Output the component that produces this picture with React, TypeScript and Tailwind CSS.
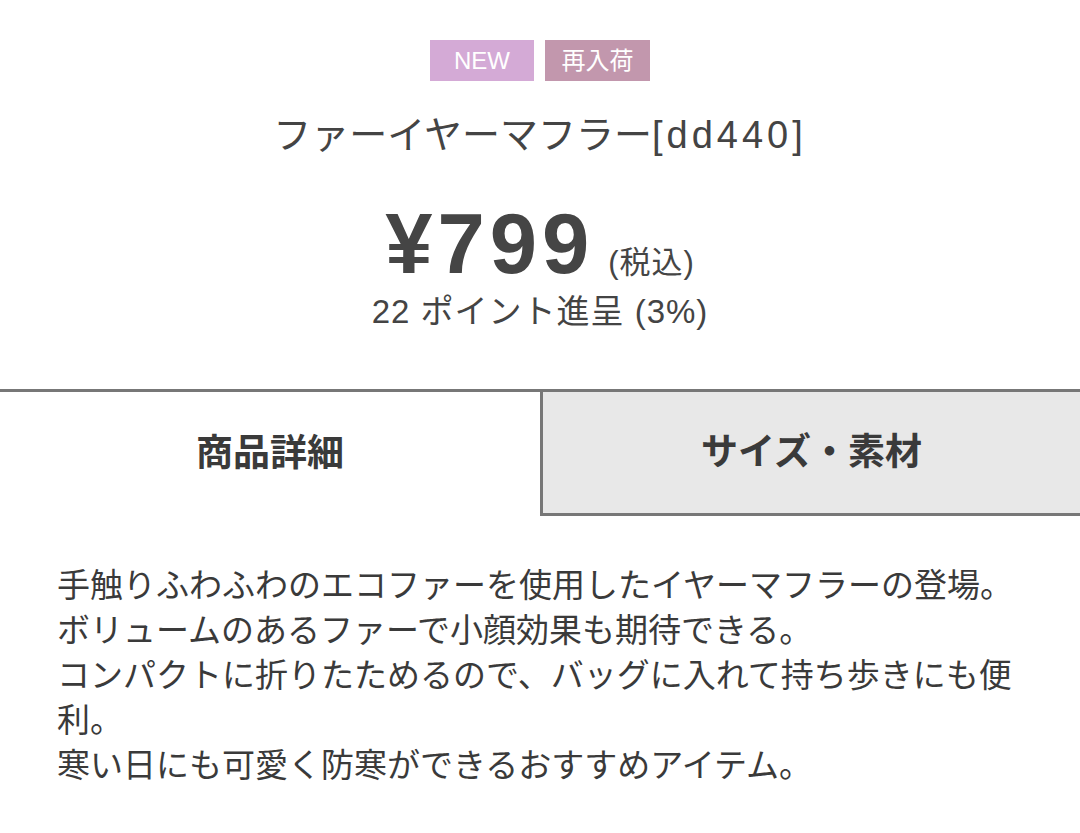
import React from "react";

const font = { fontFamily: '"Liberation Sans", "Noto Sans CJK JP", sans-serif' };

const lines = [
  "手触りふわふわのエコファーを使用したイヤーマフラーの登場。",
  "ボリュームのあるファーで小顔効果も期待できる。",
  "コンパクトに折りたためるので、バッグに入れて持ち歩きにも便利。",
  "寒い日にも可愛く防寒ができるおすすめアイテム。",
];

export default function App() {
  return (
    <div className="w-[1080px] h-[833px] bg-white text-[#444] overflow-hidden" style={font}>
      <div className="flex flex-col items-center pt-[40px]">
        <div className="flex gap-[11px]">
          <span className="flex h-[41px] w-[104px] items-center justify-center bg-[#d4aad6] text-[24px] text-white">
            NEW
          </span>
          <span className="flex h-[41px] w-[105px] items-center justify-center bg-[#c297ad] text-[24px] text-white">
            再入荷
          </span>
        </div>
        <h1 className="mt-[28px] h-[52px] text-[38px] leading-[52px] text-[#444]">
          ファーイヤーマフラー<span className="tracking-[4px]">[dd440]</span>
        </h1>
        <div className="mt-[40px] flex h-[86px] items-baseline gap-[14px] text-[#454545]">
          <span className="text-[85px] font-bold leading-[86px] tracking-[5px]">¥799</span>
          <span className="text-[31px] tracking-[1px]">(税込)</span>
        </div>
        <p className="mt-[5px] h-[40px] text-[33px] leading-[40px] tracking-[1px] text-[#444]">22 ポイント進呈 (3%)</p>
      </div>

      <div className="mt-[57px] flex border-t-[3px] border-[#777]">
        <div className="flex h-[124px] w-[540px] items-center justify-center text-[37px] font-bold text-[#3a3a3a]">
          商品詳細
        </div>
        <div className="flex h-[124px] flex-1 items-center justify-center border-l-[3px] border-b-[3px] border-[#777] bg-[#e8e8e8] text-[37px] font-bold text-[#3a3a3a]">
          サイズ・素材
        </div>
      </div>

      <div className="px-[57px] pt-[47px] text-[33px] leading-[45px] text-[#3a3a3a]">
        {lines.map((l) => (
          <p key={l}>{l}</p>
        ))}
      </div>
    </div>
  );
}
